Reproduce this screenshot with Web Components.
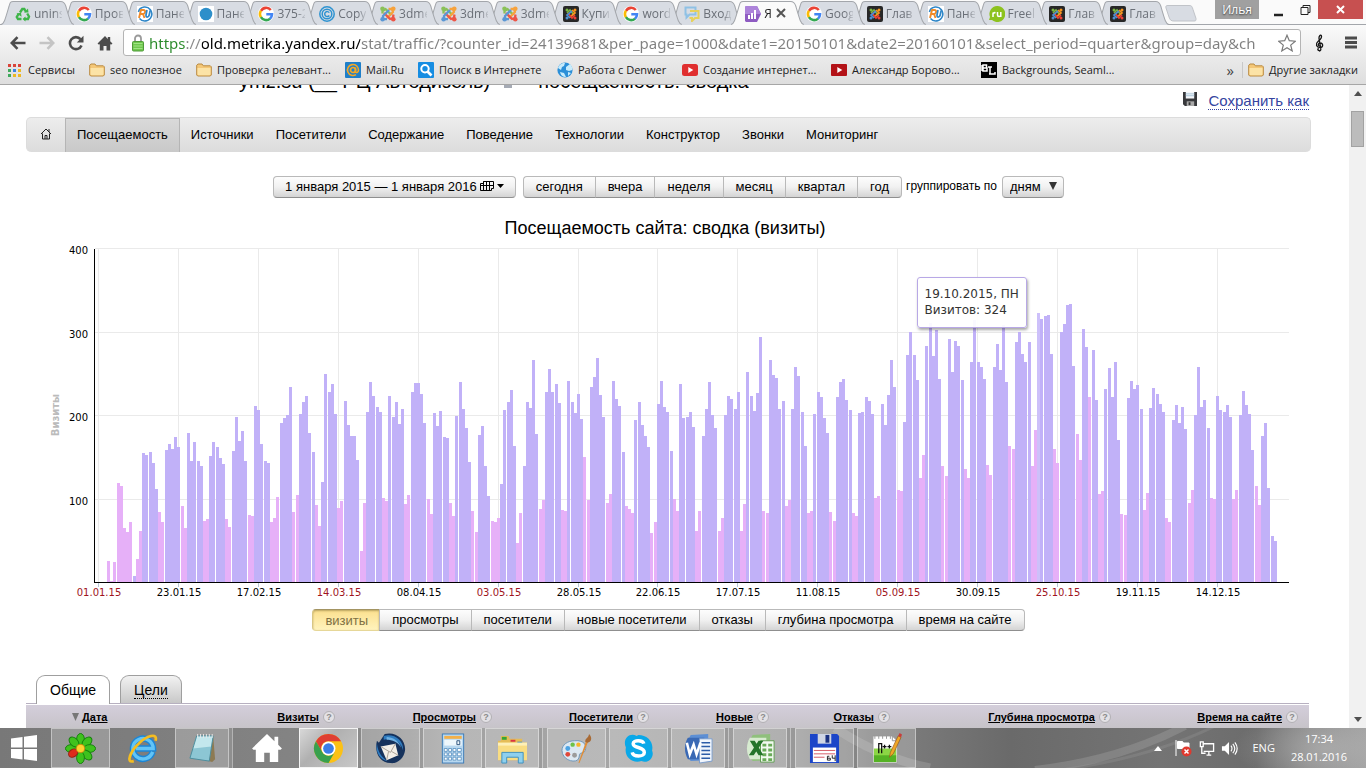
<!DOCTYPE html>
<html lang="ru">
<head>
<meta charset="utf-8">
<title>Яндекс.Метрика</title>
<style>
  html, body { margin: 0; height: 100%; }
  body { font-family: "Liberation Sans", Arial, sans-serif; font-size: 13px; color: #000; overflow: hidden; }
</style>
</head>
<body>
<desktop-screen></desktop-screen>

<script>
const UI_FONT = '"Open Sans", "Noto Sans", sans-serif';

// viewBox and markup of every icon
const ICONS = {
  recycle: ['0 0 16 16', '<g fill="none" stroke="#3fb54a" stroke-width="2.4"><path d="M5 6.5 7.3 3h2l1.8 3"/><path d="M12.2 7.5l1.8 3-1 2.5H9.500"/><path d="M6.500 13H3L1.800 11l2-3.500"/></g><path d="M9 6.500h4.500L13 2.500zM10.500 10.500v5L7.500 13zM1.500 7.500l4.500-.8.600 4z" fill="#3fb54a"/>'],
  google: ['0 0 16 16', '<rect width="16" height="16" rx="8" fill="#fff"/><g fill="none" stroke-width="2.600"><path d="M12.800 4A6 6 0 0 0 3 4.800" stroke="#ea4335"/><path d="M3 4.700a6 6 0 0 0 0 6.600" stroke="#fbbc05"/><path d="M2.900 11.200a6 6 0 0 0 9.200 1.400" stroke="#34a853"/><path d="M12 12.700A6 6 0 0 0 14 8.300H8.300" stroke="#4285f4"/></g>'],
  ru: ['0 0 16 16', '<rect width="16" height="16" fill="#fff"/><path d="M7 1a7 7 0 1 1-4.500 11.500M1.500 6C2 3 4 1.500 7 1" fill="none" stroke="#2e86c8" stroke-width="1.600"/><path d="M2 12 4 4h2.500c2.500 0 2 3.800-.5 4H3.500M6 8l1.500 4" fill="none" stroke="#f08a28" stroke-width="1.900"/><path d="M10 4 9 9c-.3 2.800 2.600 2.800 3.200 0l1-4.500" fill="none" stroke="#2e86c8" stroke-width="1.700"/>'],
  dot: ['0 0 16 16', '<rect width="16" height="16" fill="#fff"/><circle cx="8" cy="8" r="6.300" fill="#2d8fca"/>'],
  copyr: ['0 0 16 16', '<g fill="none" stroke="#2e93d1" stroke-width="1.500"><circle cx="8" cy="8" r="7.200"/><circle cx="8" cy="8" r="4.800"/><path d="M10.300 6.700a2.500 2.500 0 1 0 0 2.800"/></g>'],
  joomla: ['0 0 16 16', '<g fill="none" stroke-width="2.300" stroke-linejoin="round"><path d="M2.500 7.500V5L5.500 3l6 6" stroke="#8ac158"/><path d="M8.500 3 12 3l1 3-6 6" stroke="#f7a23c"/><path d="M13.500 8.500 13 12l-3 1-6-6" stroke="#ee5547"/><path d="M7 13.200 3 13V10l6-6" stroke="#5b97d4"/></g><circle cx="2.500" cy="2.700" r="2.300" fill="#8ac158"/><circle cx="13.300" cy="2.700" r="2.300" fill="#f7a23c"/><circle cx="13.300" cy="13.300" r="2.300" fill="#ee5547"/><circle cx="2.600" cy="13.300" r="2.300" fill="#5b97d4"/>'],
  joomlaDark: ['0 0 16 16', '<rect width="16" height="16" rx="2" fill="#272727"/><g fill="none" stroke-width="1.700"><path d="M4 7l3-3 4 5" stroke="#7ab843"/><path d="M9 4l3 3-5 4" stroke="#f7941e"/><path d="M12 9l-3 3-4-5" stroke="#ee4035"/><path d="M7 12 4 9l5-4" stroke="#4f8fd0"/></g><circle cx="4" cy="4" r="1.500" fill="#7ab843"/><circle cx="12" cy="4" r="1.500" fill="#f7941e"/><circle cx="12" cy="12" r="1.500" fill="#ee4035"/><circle cx="4" cy="12" r="1.500" fill="#4f8fd0"/>'],
  chat: ['0 0 16 16', '<path d="M1.500 1.500h10v7h-6l-3 3v-3h-1z" fill="none" stroke="#8fc1e5" stroke-width="2"/><path d="M6 5h8.500v7H11l-3 3v-3H5.500" fill="none" stroke="#e6d15c" stroke-width="2"/>'],
  metrika: ['0 0 16 16', '<path d="M1 0h11l4 8-4 8H1L0 15V1z" fill="#8f5cc2"/><path d="M1 0h11l4 8H0V1z" fill="#ad83da"/><path d="M3 9h2v4H3zM6 7h2v6H6zM9 4h2v9H9z" fill="#fff"/>'],
  freeRu: ['0 0 16 16', '<path d="M8 0a8 8 0 1 1-5 14H0l1-3A8 8 0 0 1 8 0z" fill="#8dc21f"/><path d="M4 11V6.500M4 8c.5-1.500 1.500-1.500 2.500-1.300M8.500 6v3c0 2 3 2 3.300 0V6v5" fill="none" stroke="#fff" stroke-width="1.500"/>'],
  back: ['0 0 16 16', '<path d="M15.500 8H2M7.500 2.200 1.800 8l5.700 5.800" fill="none" stroke="#4c4c4c" stroke-width="2.600"/>'],
  forward: ['0 0 16 16', '<path d="M.5 8H14M8.500 2.200 14.200 8l-5.700 5.800" fill="none" stroke="#c4c4c4" stroke-width="2.600"/>'],
  reload: ['0 0 16 16', '<path d="M13.500 10.500a6 6 0 1 1-1-6.300" fill="none" stroke="#4c4c4c" stroke-width="2.600"/><path d="M15.500.8v6.700H8.800z" fill="#4c4c4c"/>'],
  home: ['0 0 16 16', '<path d="M8 1 .5 8.500 2 9.800l.8-.8v6.500h3.700V11h3v4.500h3.700V9l.8.800 1.500-1.300-2.300-2.300V2h-2.400v1.900z" fill="#4c4c4c"/>'],
  lock: ['0 0 12 18', '<path d="M3 8V4.500a3 3 0 0 1 6 0V8" fill="none" stroke="#9a9a9a" stroke-width="1.800"/><rect x=".5" y="7.500" width="11" height="9.500" rx="1" fill="#6fc74e" stroke="#4f9a38"/><path d="M1.500 9.500h9M1.500 12h9M1.500 14.500h9" stroke="#a0e384" stroke-width="1"/>'],
  star: ['0 0 18 18', '<path d="M9 1.200 11.300 6.700l6 .5-4.600 3.900 1.500 5.800L9 13.700l-5.200 3.200 1.500-5.800L.7 7.200l6-.5z" fill="#fff" stroke="#7a7a7a" stroke-width="1.200"/>'],
  clef: ['0 0 12 18', '<path d="M6 16.500c-2 .5-3-1.500-1.300-2.200M5 17c2 0 2-1.500 1.700-3L5 4.500C4.700 2 6.500.5 7.300 1.500 8.500 4 6.500 5.500 4 7.500c-3 2.500-1.500 6 2 6 3.500 0 3.500-4.500.3-4.500-2.500 0-2.500 2.800-.8 3" fill="none" stroke="#151515" stroke-width="1.300"/>'],
  menu: ['0 0 14 13', '<path d="M1 2h12M1 6.500h12M1 11h12" stroke="#4c4c4c" stroke-width="3"/>'],
  apps: ['0 0 16 16', '<path d="M1 2h3v3H1zM11 2h3v3h-3z" fill="#d9443a"/><path d="M6 2h3v3H6z" fill="#d9443a"/><path d="M1 7h3v3H1z" fill="#40a95c"/><path d="M6 7h3v3H6z" fill="#3d84e2"/><path d="M11 7h3v3h-3z" fill="#edb824"/><path d="M1 12h3v3H1z" fill="#40a95c"/><path d="M6 12h3v3H6zM11 12h3v3h-3z" fill="#edb824"/>'],
  folder: ['0 0 16 14', '<path d="M.7 12V2.200L2 1h4l1.300 1.800h7l1 1V12l-1 1H1.700z" fill="#f4c777" stroke="#b98b42"/><path d="M1.500 5h13v6.500l-1 .8h-11l-1-.8z" fill="#fce3a6"/>'],
  mailru: ['0 0 16 16', '<rect width="16" height="16" rx="1" fill="#1f7fc9"/><g fill="none" stroke="#f7a823"><circle cx="8" cy="8" r="2.500" stroke-width="1.700"/><path d="M10.500 5.500v4c0 1.500 3 1.500 3-1.500a5.500 5.500 0 1 0-2.500 4.600" stroke-width="1.600"/></g>'],
  search: ['0 0 16 16', '<rect width="16" height="16" rx="1" fill="#168de2"/><circle cx="7" cy="6.700" r="3.700" fill="none" stroke="#fff" stroke-width="2"/><path d="M9.500 9.500l4 4" stroke="#fff" stroke-width="2.600"/>'],
  globe: ['0 0 16 16', '<circle cx="8" cy="8" r="7.600" fill="#2b8fd8"/><path d="M1 6c1-4 5-5.500 7-5l-1 3-2 1-1 3zM9 5l4-3c2 2 2.500 4 2.300 6L12 9 9 8zM3 10l4 1 2 4c-3 0-5-1-6-5zM11 10l3 1-3 3z" fill="#c7ebfb"/>'],
  yt: ['0 0 16 16', '<rect y="2" width="16" height="12" rx="2.500" fill="#e02f2f"/><path d="M6.300 5v6l5-3z" fill="#fff"/>'],
  ytDark: ['0 0 16 16', '<rect y="2" width="16" height="12" rx="1" fill="#b31217"/><path d="M6.300 5v6l5-3z" fill="#fff"/>'],
  bl: ['0 0 16 16', '<rect width="16" height="16" fill="#000"/><path d="M2 3h3.500v3H2zM2 6h4v3H2zM1 3v6M9 5v7h5v-2M7 5h4M8 12h4" fill="none" stroke="#fff" stroke-width="1.500"/>'],
  disk: ['0 0 15 15', '<path d="M0 0h15v15H2l-2-2z" fill="#38393c"/><path d="M3 0h9v7H3z" fill="#f5f8fb"/><path d="M3 2h9M3 4h9" stroke="#a8c4d8"/><path d="M4 10h8v5H4z" fill="#aaa"/><path d="M6 11h2v3H6z" fill="#333"/>'],
  house: ['0 0 12 12', '<path d="M1 6 6 1l5 5M2.500 5.500V11h7V5.500M9 1v3M5 11V7.500h2V11" fill="none" stroke="#222"/>'],
  calendar: ['0 0 14 10', '<path d="M3.500.5h10v7h-2v2H.5v-7h3zM3.500.5v9M6.500.5v9M9.500.5v9M.5 4.500h13" fill="none" stroke="#000"/>'],
  windows: ['0 0 28 28', '<path d="M1 4.500 12.500 3v10.500H1zM14 2.800 27 1v12.500H14zM1 15h11.500v10.500L1 24zM14 15h13v12l-13-1.800z" fill="#fff"/>'],
  icq: ['0 0 32 32', '<g fill="#3fc21d" stroke="#14800c"><ellipse cx="16" cy="6.500" rx="4" ry="6"/><ellipse cx="16" cy="6.500" rx="4" ry="6" transform="rotate(45 16 16)"/><ellipse cx="16" cy="6.500" rx="4" ry="6" transform="rotate(90 16 16)"/><ellipse cx="16" cy="6.500" rx="4" ry="6" transform="rotate(135 16 16)"/><ellipse cx="16" cy="6.500" rx="4" ry="6" transform="rotate(180 16 16)"/><ellipse cx="16" cy="6.500" rx="4" ry="6" transform="rotate(270 16 16)"/><ellipse cx="16" cy="6.500" rx="4" ry="6" transform="rotate(315 16 16)"/></g><ellipse cx="16" cy="7" rx="3.800" ry="5" fill="#e02a1b" stroke="#921" transform="rotate(238 16 16)"/><circle cx="16" cy="16" r="4.200" fill="#ffd22e" stroke="#c89010"/>'],
  ie: ['0 0 32 32', '<path d="M26.500 19.500A10.500 10.500 0 1 1 27 16H9" fill="none" stroke="#1c86d6" stroke-width="6.500"/><path d="M26.500 19.500A10.500 10.500 0 1 1 27 16H9" fill="none" stroke="#62c4f6" stroke-width="3.500"/><path d="M7 29c-9 3-3-11 5-18C20 3 32-1 29.500 8" fill="none" stroke="#f4bd21" stroke-width="2.800"/>'],
  notes: ['0 0 32 32', '<path d="M10 3h17l2 24-3 3-4-1z" fill="#8d7a52"/><path d="M10 3h17l-4 26-20-3z" fill="#8cc6d4"/><path d="M10 3h17l-2 11-19 2z" fill="#c3e7ed"/><path d="M10 3h17l-4 26-20-3z" fill="none" stroke="#4b8c9d"/><path d="M11 1v4M14 1v4M17 1v4M20 1v4M23 1v4M26 1v4" stroke="#e8e8e8"/>'],
  bigHome: ['0 0 32 30', '<path d="M16 0 0 15.500l1.500 1.500H4v13h9V20h6v10h9V17h2.500l1.500-1.500-4-4V3h-4v4.700z" fill="#fff"/>'],
  chrome: ['0 0 32 32', '<circle cx="16" cy="16" r="15" fill="#fbc116"/><path d="M3 8.500A15 15 0 0 1 29 8.500H16A7.500 7.500 0 0 0 9.500 20z" fill="#df3e32"/><path d="M3 8.500A15 15 0 0 0 16 31l6.500-11.300A7.500 7.500 0 0 1 9.500 19.700z" fill="#38a04d"/><circle cx="16" cy="16" r="7.200" fill="#fff"/><circle cx="16" cy="16" r="5.500" fill="#3c7ee6"/>'],
  bird: ['0 0 32 32', '<path d="M8 4 10 1c12-3 22 6 21 17-1 8-8 14-15 13C5 31-1 20 2 8l2 2z" fill="#16325c"/><path d="M9 3c10-3 21 4 20 15C27 9 19 5 9 7zM2 11c1 9 5 14 11 18C6 28 0 20 2 11z" fill="#2f7cc0"/><path d="M12 4c6 0 13 4 15 11C23 9 18 7 12 7z" fill="#6fb1e4"/><path d="M6 14l15-3 3 12-12 5z" fill="#f3efe8"/><path d="M6 14l10 6 5-9M12 28l2-9M24 23l-7-4" fill="none" stroke="#a8a097"/>'],
  calc: ['0 0 24 32', '<rect x="1" y="1" width="22" height="30" fill="#b8d8f0" stroke="#3e7db8"/><path d="M3 3h18v3H3z" fill="#f2b04a"/><path d="M3 7h18v6H3z" fill="#eef7fc"/><path d="M16 8h3v4h-3z" fill="none" stroke="#2e5680"/><path d="M3 16h3v3H3zM7.500 16h3v3h-3zM12 16h3v3h-3zM16.500 16h4v3h-4zM3 20.500h3v3H3zM7.500 20.500h3v3h-3zM12 20.500h3v3h-3zM16.500 20.500h4v3h-4zM3 25h3v3H3zM7.500 25h3v3h-3zM12 25h3v3h-3zM16.500 25h4v3h-4z" fill="#fff" stroke="#508bbd" stroke-width=".8"/>'],
  files: ['0 0 32 32', '<path d="M1 8h3V3h8l1 3h13v4h5v18H1z" fill="#e5bd57"/><path d="M5 4h5v3H5z" fill="#37a537"/><path d="M14 7h5v2h-5z" fill="#d34"/><path d="M21 9h5v2h-5z" fill="#38c"/><path d="M1 10h30v18H1z" fill="#f9dd82"/><path d="M1 10h30v3H1z" fill="#fdf0b8"/><path d="M5 31V20h22v11h-5v-6H10v6z" fill="#8ed0ee" stroke="#3f92bf"/>'],
  paint: ['0 0 32 32', '<path d="M14 8c10-1 13 5 11 10-1 3-3 2-5 3s0 4-3 7C12 31 1 27 1 18 1 12 7 8 14 8z" fill="#dce8f2" stroke="#6f97ba"/><circle cx="7" cy="16" r="2.500" fill="#4ba3e4"/><circle cx="12" cy="12" r="2.300" fill="#6cc24a"/><circle cx="18" cy="12" r="2.300" fill="#f7b52b"/><circle cx="7" cy="22" r="2.500" fill="#e0483a"/><circle cx="14" cy="23" r="2.500" fill="#9b9b9b"/><path d="M18 31 26 8l2 1-9 22z" fill="#e08d36"/><path d="M25 9c0-4 3-3 4-8 4 4 2 9-2 9z" fill="#a86a35"/>'],
  skype: ['0 0 32 32', '<path d="M16 2c9 0 16 7 14 16 3 7-4 14-11 11C9 32 1 24 3 15-1 6 7-1 14 3z" fill="#0aa8e8"/><path d="M21.500 11c-1-4-11-4-11 0 0 5 11.500 3 11.500 9 0 5-11.500 5-12.500 0" fill="none" stroke="#fff" stroke-width="3.600"/>'],
  word: ['0 0 32 32', '<path d="M8 2 26 1v27l-18 1C3 24 2 10 8 2z" fill="#5d8fd4"/><path d="M5 5h17v22H5C1 20 1 12 5 5z" fill="#3a69b4"/><path d="M17 6h13v23l-13 2z" fill="#f1f6fd" stroke="#7c9dcb"/><path d="M19 10h9M19 14h9M19 18h9M19 22h9M19 26h9" stroke="#2c5ca8" stroke-width="1.600"/><path d="M4 10l3 12 4-10 3 10 4-12" fill="none" stroke="#fff" stroke-width="2.600"/>'],
  excel: ['0 0 32 32', '<path d="M8 2 26 1v27l-18 1C3 24 2 10 8 2z" fill="#8fc07c"/><path d="M5 5h17v22H5C1 20 1 12 5 5z" fill="#d7ebd0"/><path d="M16 8h14v22H16z" fill="#f3faf1" stroke="#5f9d51"/><path d="M18 11h4v3h-4zM24 11h4v3h-4zM18 16h4v3h-4zM24 16h4v3h-4zM18 21h4v3h-4zM24 21h4v3h-4zM18 26h4v3h-4zM24 26h4v3h-4z" fill="#69aa58"/><path d="M5 8h5l9 15h-5zM14 8h5L9 23H4z" fill="#24742a"/>'],
  floppy: ['0 0 32 32', '<path d="M1 1h28l2 2v28H1z" fill="#1b45c8"/><path d="M9 1h14v10H9z" fill="#d0d6e4"/><path d="M17 2h4v8h-4z" fill="#1b3180"/><path d="M4 15h24v15H4z" fill="#fff"/><path d="M5 18h22M5 21.500h22M5 25h11" stroke="#d45a64"/><path d="M21 24h-2v4h3v-2h-3M24 23v3h3M27 23v6" fill="none" stroke="#222"/>'],
  npp: ['0 0 32 32', '<path d="M2 3h20l5 5v23H2z" fill="#fff" stroke="#999"/><path d="M3 16h23v14H3z" fill="#8bd644"/><path d="M3 23h23v7H3z" fill="#55b224"/><path d="M4 2v4M8 2v4M12 2v4M16 2v4M20 2v4" stroke="#999"/><path d="M22 3v5h5" fill="none" stroke="#999"/><path d="M8 21V11h3v10M12 14h4M14 12v4M17 14h4M19 12v4" fill="none" stroke="#111" stroke-width="1.300"/><path d="M19 25l1-5L28 3l3 1.500-8 17z" fill="#f0a727" stroke="#96581a" stroke-width=".7"/><path d="M28 3l1.500-3L32 1.500 31 4.500z" fill="#c83c3c"/>'],
  flag: ['0 0 18 18', '<path d="M2 1v16M3.500 2.500h5l1 1.500H15v7H9L8 9.500H3.500z" fill="#fff" stroke="#fff"/><circle cx="12.500" cy="12.500" r="5" fill="#e0392e"/><path d="M10.500 10.500l4 4M14.500 10.500l-4 4" stroke="#fff" stroke-width="1.500"/>'],
  net: ['0 0 18 18', '<path d="M6 4h10.500v8H6M9 16h5M11.500 12v4M2.500 2h3v5h-3zM4 7v7h4" fill="none" stroke="#fff" stroke-width="1.400"/>'],
  sound: ['0 0 18 18', '<path d="M1 6.500h3L8.500 2v14L4 11.500H1z" fill="#fff"/><path d="M10.500 6c1.500 2 1.500 4 0 6M12.500 4c2.500 3 2.500 7 0 10M14.700 2.500c3 4 3 9 0 13" fill="none" stroke="#fff" stroke-width="1.200"/>']
};

class SvgIcon extends HTMLElement {
  connectedCallback() {
    const [box, body] = ICONS[this.getAttribute('name')];
    const w = this.getAttribute('w') || 16;
    const h = this.getAttribute('h') || w;
    this.attachShadow({ mode: 'open' }).innerHTML = `
      <style>:host { display: block; flex: none; } svg { display: block; }</style>
      <svg viewBox="${box}" width="${w}" height="${h}" aria-hidden="true">${body}</svg>`;
  }
}
customElements.define('svg-icon', SvgIcon);


// ---------- browser ----------

class BrowserTab extends HTMLElement {
  connectedCallback() {
    const active = this.hasAttribute('active');
    this.attachShadow({ mode: 'open' }).innerHTML = `
      <style>
        :host { position: relative; flex: 1 1 0; min-width: 0; height: 25px; }
        .shape { position: absolute; top: 0; left: 0; width: calc(100% + 12px); height: 25px; }
        button { position: relative; display: flex; align-items: center; gap: 3px; width: 100%; height: 25px;
          margin: 0; padding: 2px 0 0 14px; border: 0; background: none; font: 12px ${UI_FONT}; color: ${active ? '#222' : '#6a6f77'}; }
        span { flex: 1; min-width: 0; overflow: hidden; white-space: nowrap; text-align: left;
          mask-image: linear-gradient(to right, #000 70%, rgba(0,0,0,.2)); }
        .close { position: absolute; top: 8px; right: 6px; }
      </style>
      <svg class="shape" viewBox="0 0 72 25" preserveAspectRatio="none">
        <path d="M0 25C3 24 4 20 8 6 9 3 9 2 12 2H59C62 2 63 3 64 6 68 20 69 24 72 25z" fill="${active ? '#fafafa' : '#d8dce3'}"/>
        <path d="M0 24.500C3 24 4 20 8 6 9 3 9 1.500 12 1.500H59C62 1.500 63 3 64 6 68 20 69 24 72 24.500" fill="none" stroke="#a3a6ab"/>
      </svg>
      <button><svg-icon name="${this.getAttribute('icon')}"></svg-icon><span><slot></slot></span></button>
      ${active ? '<svg class="close" width="10" height="10"><path d="M1 1l8 8M9 1 1 9" stroke="#555" stroke-width="2"/></svg>' : ''}`;
  }
}
customElements.define('browser-tab', BrowserTab);

const TABS = [
  ['recycle', 'unins'], ['google', 'Пров'], ['ru', 'Пане'], ['dot', 'Пане'], ['google', '375-2'], ['copyr', 'Copy'],
  ['joomla', '3dme'], ['joomla', '3dme'], ['joomla', '3dme'], ['joomlaDark', 'Купи'], ['google', 'word'], ['chat', 'Вход'],
  ['metrika', 'Я'], ['google', 'Goog'], ['joomlaDark', 'Глав'], ['ru', 'Пане'], ['freeRu', 'Freel'], ['joomlaDark', 'Глав'], ['joomlaDark', 'Глав']
];
const ACTIVE_TAB = 12;

class TabStrip extends HTMLElement {
  connectedCallback() {
    this.attachShadow({ mode: 'open' }).innerHTML = `
      <style>
        :host { display: flex; height: 25px; background: linear-gradient(#fafafa 24px, #a3a6ab 24px); }
        .tabs { display: flex; flex: 0 1 1156px; min-width: 0; padding-left: 1px; isolation: isolate; }
        .new { flex: none; margin: 5px 0 0 8px; }
        .window { display: flex; margin-left: auto; padding-right: 3px; align-items: flex-start; }
        button { border: 0; padding: 0; margin: 0; background: none; }
        .user { width: 44px; height: 19px; margin-right: 7px; background: #a0a0a0; color: #fff; font: 12px ${UI_FONT}; text-shadow: 0 1px 2px #333; }
        .min, .max { width: 26px; height: 19px; }
        .close { width: 45px; height: 19px; background: #c75050; }
        .window svg { display: block; margin: auto; }
      </style>
      <div class="tabs">
        ${TABS.map(([icon, title], i) => `<browser-tab icon="${icon}" style="z-index:${i === ACTIVE_TAB ? 30 : 20 - i}" ${i === ACTIVE_TAB ? 'active' : ''}>${title}</browser-tab>`).join('')}
      </div>
      <svg class="new" width="32" height="17"><path d="M3 .500H24c3 0 3 1 4 4l3 9c0 2 0 2.500-2 2.500H9c-3 0-4-1-5-4L1 3C.5 1 1 .500 3 .500z" fill="#d8dce3" stroke="#c0c3c8"/></svg>
      <div class="window">
        <button class="user">Илья</button>
        <button class="min" aria-label="Свернуть"><svg width="10" height="14"><path d="M0 12h9" stroke="#222" stroke-width="2.500"/></svg></button>
        <button class="max" aria-label="Восстановить"><svg width="11" height="13"><path d="M3 4.500V2.500h7v7H8M1 4.500h7v7H1z" fill="none" stroke="#222"/></svg></button>
        <button class="close" aria-label="Закрыть"><svg width="9" height="9"><path d="M1 1l7 7M8 1 1 8" stroke="#fff" stroke-width="2"/></svg></button>
      </div>`;
  }
}
customElements.define('tab-strip', TabStrip);

class AddressBar extends HTMLElement {
  connectedCallback() {
    this.attachShadow({ mode: 'open' }).innerHTML = `
      <style>
        :host { display: flex; align-items: center; height: 35px; background: linear-gradient(#fafafa, #e9e9e9); padding: 0 8px 0 10px; }
        button { border: 0; background: none; padding: 0; margin: 0 13px 0 0; }
        .field { flex: 1; display: flex; align-items: center; height: 25px; min-width: 0; padding: 0 4px 0 8px;
          background: #fff; border: 1px solid #b4b4b4; border-radius: 3px; }
        /* scheme green, host black, the rest grey */
        input { flex: 1; min-width: 0; height: 23px; margin: 0 0 0 5px; padding: 0; border: 0; outline: 0; font: 15px "Noto Sans", "Open Sans", sans-serif;
          color: #808080; -webkit-text-fill-color: transparent;
          background: linear-gradient(to right, #2a8a2a 37px, #888 37px 53px, #000 53px 211px, #808080 211px);
          -webkit-background-clip: text; background-clip: text; }
        .field button, .tools button { margin: 0; }
        .tools { display: flex; align-items: center; gap: 18px; margin-left: 13px; }
      </style>
      <button aria-label="Назад"><svg-icon name="back"></svg-icon></button>
      <button aria-label="Вперёд"><svg-icon name="forward"></svg-icon></button>
      <button aria-label="Обновить"><svg-icon name="reload"></svg-icon></button>
      <button aria-label="Домой" style="margin-right:10px"><svg-icon name="home"></svg-icon></button>
      <div class="field">
        <svg-icon name="lock" w="12" h="18"></svg-icon>
        <input aria-label="Адрес" value="https://old.metrika.yandex.ru/stat/traffic/?counter_id=24139681&amp;per_page=1000&amp;date1=20150101&amp;date2=20160101&amp;select_period=quarter&amp;group=day&amp;ch">
        <button aria-label="В закладки"><svg-icon name="star" w="18"></svg-icon></button>
      </div>
      <div class="tools">
        <button aria-label="Расширение"><svg-icon name="clef" w="12" h="18"></svg-icon></button>
        <button aria-label="Меню"><svg-icon name="menu" w="14" h="13"></svg-icon></button>
      </div>`;
  }
}
customElements.define('address-bar', AddressBar);

class BookmarkLink extends HTMLElement {
  connectedCallback() {
    const icon = this.getAttribute('icon');
    this.attachShadow({ mode: 'open' }).innerHTML = `
      <style>
        :host { display: block; }
        a { display: flex; align-items: center; gap: 5px; color: #222; text-decoration: none; white-space: nowrap; font: 11px/16px ${UI_FONT}; }
      </style>
      <a href="#"><svg-icon name="${icon}" w="16" h="${icon === 'folder' ? 14 : 16}"></svg-icon><slot></slot></a>`;
  }
}
customElements.define('bookmark-link', BookmarkLink);

class BookmarksBar extends HTMLElement {
  connectedCallback() {
    this.attachShadow({ mode: 'open' }).innerHTML = `
      <style>
        :host { display: flex; box-sizing: border-box; align-items: center; justify-content: space-between; height: 25px; padding: 0 8px 4px 7px;
          background: linear-gradient(#e9e9e9, #dedede); border-bottom: 1px solid #a6a6a6; color: #222; }
        nav { display: grid; grid-template-columns: 82px 107px 149px 73px 139px 125px 149px 150px auto; }
        .rest { display: flex; align-items: center; gap: 5px; }
        .rest button { border: 0; border-right: 1px solid #c8c8c8; background: none; padding: 0 8px; font: 15px/16px ${UI_FONT}; color: #444; }
      </style>
      <nav>
        <bookmark-link icon="apps">Сервисы</bookmark-link>
        <bookmark-link icon="folder">seo полезное</bookmark-link>
        <bookmark-link icon="folder">Проверка релевант...</bookmark-link>
        <bookmark-link icon="mailru">Mail.Ru</bookmark-link>
        <bookmark-link icon="search">Поиск в Интернете</bookmark-link>
        <bookmark-link icon="globe">Работа с Denwer</bookmark-link>
        <bookmark-link icon="yt">Создание интернет...</bookmark-link>
        <bookmark-link icon="ytDark">Александр Борово...</bookmark-link>
        <bookmark-link icon="bl">Backgrounds, Seaml...</bookmark-link>
      </nav>
      <div class="rest">
        <button>»</button>
        <bookmark-link icon="folder">Другие закладки</bookmark-link>
      </div>`;
  }
}
customElements.define('bookmarks-bar', BookmarksBar);

class ScrollTrack extends HTMLElement {
  connectedCallback() {
    this.attachShadow({ mode: 'open' }).innerHTML = `
      <style>
        :host { flex: none; width: 17px; box-sizing: border-box; padding: 6px 2px; display: flex; flex-direction: column; align-items: center; background: #f1f1f1; }
        .thumb { align-self: stretch; height: 34px; margin-top: 15px; background: #bcbcbc; border: 1px solid #a2a2a2; }
        svg:last-child { margin-top: auto; }
      </style>
      <svg width="8" height="5"><path d="M0 5 4 0l4 5z" fill="#505050"/></svg>
      <div class="thumb"></div>
      <svg width="8" height="5"><path d="M0 0h8L4 5z" fill="#505050"/></svg>`;
  }
}
customElements.define('scroll-track', ScrollTrack);


// ---------- report ----------

class ReportHeader extends HTMLElement {
  connectedCallback() {
    this.attachShadow({ mode: 'open' }).innerHTML = `
      <style>
        :host { display: flex; justify-content: space-between; align-items: flex-start; height: 32px; padding-right: 2px; }
        h1 { display: flex; gap: 14px; margin: -16px 0 0 213px; font: 20px/24px "Liberation Sans", Arial, sans-serif; white-space: nowrap; }
        i { width: 8px; height: 9px; margin: 10px 12px 0 0; background: #a5aab4; }
        .save { display: flex; gap: 11px; padding-top: 7px; }
        a { font-size: 15px; line-height: 17px; color: #3544a0; text-decoration: none; border-bottom: 1px dotted #3544a0; }
      </style>
      <h1><span>ymz.su (__ РЦ Автодизель)</span><i></i><span>посещаемость: сводка</span></h1>
      <div class="save"><svg-icon name="disk" w="14"></svg-icon><a href="#">Сохранить как</a></div>`;
  }
}
customElements.define('report-header', ReportHeader);

class ReportNav extends HTMLElement {
  connectedCallback() {
    const items = ['Посещаемость', 'Источники', 'Посетители', 'Содержание', 'Поведение', 'Технологии', 'Конструктор', 'Звонки', 'Мониторинг'];
    this.attachShadow({ mode: 'open' }).innerHTML = `
      <style>
        :host { display: flex; box-sizing: border-box; height: 35px; border: 1px solid #dcdcdc; border-bottom: 0; border-radius: 5px;
          background: linear-gradient(#ededed, #dcdcdc); overflow: hidden; }
        a { display: flex; align-items: center; padding: 0 11px 2px; color: #000; text-decoration: none; font-size: 13px; }
        a.home { padding: 0 13px 2px; }
        a.on { background: linear-gradient(#dadada, #c9c9c9); border: solid #b5b5b5; border-width: 0 1px; box-shadow: inset 0 1px #b5b5b5; }
      </style>
      <a class="home" href="#" aria-label="Главная"><svg-icon name="house" w="12"></svg-icon></a>
      ${items.map((t, i) => `<a href="#" class="${i ? '' : 'on'}">${t}</a>`).join('')}`;
  }
}
customElements.define('report-nav', ReportNav);

const BUTTON_LOOK = 'background: linear-gradient(#fdfdfd, #f1f1f1 50%, #d4d4d4); border: 1px solid #b9b9b9; border-bottom-color: #8f8f8f;';

// comma separated labels in "items", the pressed one in "value"
class ButtonGroup extends HTMLElement {
  connectedCallback() {
    const value = this.getAttribute('value');
    this.attachShadow({ mode: 'open' }).innerHTML = `
      <style>
        :host { display: flex; }
        button { height: 22px; margin: 0; padding: 0 12px 2px; font: inherit; color: #000; ${BUTTON_LOOK} border-right-width: 0; }
        button:first-of-type { border-radius: 4px 0 0 4px; }
        button:last-of-type { border-radius: 0 4px 4px 0; border-right-width: 1px; }
        button.on { color: #7d7043; background: linear-gradient(#fbe08e, #fff3bd); border-color: #a39462 #d8c684 #e6d798; box-shadow: inset 0 1px 2px #b9a35f; padding: 1px 11px 0 12px; }
      </style>
      ${this.getAttribute('items').split(',').map(t => `<button class="${t === value ? 'on' : ''}">${t}</button>`).join('')}`;
  }
}
customElements.define('button-group', ButtonGroup);

class PeriodPicker extends HTMLElement {
  connectedCallback() {
    this.attachShadow({ mode: 'open' }).innerHTML = `
      <style>
        :host { display: flex; justify-content: center; align-items: center; height: 22px; }
        .date, select { height: 22px; margin: 0; font: inherit; color: #000; border-radius: 4px; ${BUTTON_LOOK} }
        .date { display: flex; align-items: center; gap: 3px; padding: 0 11px 2px; margin-right: 7px; }
        label { font-size: 12px; margin: 0 5px 2px 4px; }
        .pick { position: relative; display: flex; }
        select { appearance: none; width: 62px; padding: 0 0 2px 7px; }
        .pick svg { position: absolute; right: 7px; top: 6px; pointer-events: none; }
      </style>
      <button class="date">1 января 2015 — 1 января 2016 <svg-icon name="calendar" w="14" h="10"></svg-icon><svg width="7" height="4"><path d="M0 0h7L3.500 4z"/></svg></button>
      <button-group items="сегодня,вчера,неделя,месяц,квартал,год"></button-group>
      <label for="group">группировать по</label>
      <div class="pick"><select id="group"><option>дням</option></select><svg width="8" height="8"><path d="M0 0h8L4 8z" fill="#333"/></svg></div>`;
  }
}
customElements.define('period-picker', PeriodPicker);

// one bar per day, in px of a 334px high plot; the axis starts on Monday 29.12.2014
const VISITS = [
  0, 0, 0, 21, 1, 20, 99, 96, 54, 50, 60, 6, 23, 51, 129, 127, 130, 119, 93, 70, 60, 132, 138, 133, 145, 135, 76, 54,
  149, 121, 140, 121, 116, 61, 63, 126, 140, 135, 124, 118, 63, 55, 131, 165, 141, 151, 121, 67, 66, 176, 172, 138, 121, 119, 60, 64,
  85, 159, 164, 167, 195, 70, 87, 168, 180, 186, 149, 130, 77, 56, 100, 208, 190, 198, 168, 74, 81, 181, 157, 146, 146, 122, 31, 79,
  170, 200, 186, 175, 170, 84, 81, 186, 165, 180, 158, 173, 78, 87, 190, 199, 199, 188, 159, 83, 68, 169, 156, 171, 145, 144, 79, 66,
  166, 200, 173, 154, 120, 71, 50, 147, 156, 116, 86, 61, 60, 64, 98, 172, 180, 192, 136, 39, 69, 116, 180, 174, 222, 148, 73, 82,
  190, 213, 190, 198, 179, 72, 71, 201, 180, 169, 188, 163, 125, 82, 195, 205, 224, 187, 165, 79, 88, 201, 183, 176, 130, 76, 73, 69,
  162, 180, 157, 146, 135, 49, 60, 178, 201, 175, 170, 131, 83, 71, 198, 164, 165, 170, 155, 51, 71, 146, 173, 200, 167, 154, 51, 64,
  167, 186, 183, 173, 190, 51, 78, 210, 186, 171, 189, 245, 71, 69, 222, 207, 204, 173, 181, 76, 82, 173, 215, 206, 170, 136, 69, 71,
  168, 190, 185, 164, 149, 70, 61, 185, 200, 203, 182, 172, 69, 66, 169, 170, 185, 181, 168, 84, 86, 178, 157, 187, 222, 195, 92, 91,
  160, 227, 250, 227, 202, 104, 127, 236, 259, 226, 252, 203, 116, 106, 243, 210, 241, 236, 202, 113, 104, 220, 262, 220, 215, 203, 117, 107,
  215, 238, 212, 257, 200, 136, 133, 240, 250, 228, 220, 240, 116, 152, 269, 263, 266, 267, 228, 133, 119, 250, 258, 277, 278, 216, 148, 122,
  253, 235, 185, 232, 182, 88, 91, 193, 214, 185, 220, 142, 68, 67, 184, 201, 193, 197, 173, 72, 89, 174, 194, 188, 178, 170, 64, 60,
  162, 177, 159, 175, 153, 79, 92, 167, 215, 175, 182, 154, 84, 83, 186, 172, 170, 177, 165, 83, 92, 167, 191, 177, 168, 132, 96, 77,
  146, 159, 94, 46, 41
];
const HOLIDAYS = [3, 4, 5, 6, 7, 8, 9, 10, 56, 123, 165, 310];
const DATES = ['01.01.15', '23.01.15', '17.02.15', '14.03.15', '08.04.15', '03.05.15', '28.05.15', '22.06.15',
  '17.07.15', '11.08.15', '05.09.15', '30.09.15', '25.10.15', '19.11.15', '14.12.15'];
const RED_DATES = ['01.01.15', '14.03.15', '03.05.15', '05.09.15', '25.10.15'];
const HOVERED = 294;

class VisitsChart extends HTMLElement {
  connectedCallback() {
    this.attachShadow({ mode: 'open' }).innerHTML = `
      <style>
        :host { display: block; position: relative; height: 358px; }
        svg { display: block; width: 100%; height: 358px; font: 10px "DejaVu Sans", Verdana, sans-serif; }
        .tip { position: absolute; left: 69.3%; top: 35px; box-sizing: border-box; width: 110px; height: 51px; padding: 8px 0 0 7px; white-space: nowrap;
          font: 12px/16px "DejaVu Sans", Verdana, sans-serif; color: #333; background: rgba(255,255,255,.92);
          border: 1px solid #b8a8e6; border-radius: 3px; box-shadow: 1px 2px 3px rgba(0,0,0,.35); }
      </style>
      <svg role="img" aria-label="Визиты по дням"></svg>
      <div class="tip"><div>19.10.2015, ПН</div><div>Визитов: 324</div></div>`;
    this.svg = this.shadowRoot.querySelector('svg');
    new ResizeObserver(() => this.draw()).observe(this);
  }

  draw() {
    const left = 69, top = 6, base = 340;
    const right = this.clientWidth - 22;
    const pitch = (right - left) / 373.5;
    let out = '';

    for (let n = 0; n < 4; n++) {
      const y = top + Math.round(n * (base - top) / 4);
      out += `<rect x="${left}" y="${y}" width="${right - left}" height="1" fill="#eaeaea"/>
        <text x="62" y="${y + 6}" text-anchor="end">${400 - n * 100}</text>`;
    }
    DATES.forEach((d, n) => {
      const x = left + 3 + Math.round(n * 25 * pitch);
      out += `<rect x="${x}" y="${top}" width="1" height="${base - top}" fill="#eaeaea"/>
        <rect x="${x}" y="${base}" width="1" height="5" fill="#b5c5d5"/>
        <text x="${x + 1}" y="${base + 14}" text-anchor="middle" fill="${RED_DATES.includes(d) ? '#a0141e' : '#000'}">${d}</text>`;
    });
    VISITS.forEach((h, i) => {
      if (!h) return;
      const off = i % 7 > 4 || HOLIDAYS.includes(i);
      const fill = i === HOVERED ? '#cdc0fa' : off ? '#e6b0f8' : '#c1b1f8';
      out += `<rect x="${left + Math.round(2.4 + i * pitch)}" y="${base - h}" width="3" height="${h}" fill="${fill}"/>`;
    });
    out += `<rect x="${left - 1}" y="${top + 1}" width="1" height="${base - top}"/>
      <rect x="${left}" y="${base}" width="${right - left}" height="1"/>
      <text transform="translate(33 173) rotate(-90)" text-anchor="middle" font-weight="bold" fill="#bbb">Визиты</text>`;
    this.svg.innerHTML = out;
  }
}
customElements.define('visits-chart', VisitsChart);

class ReportTabs extends HTMLElement {
  connectedCallback() {
    this.attachShadow({ mode: 'open' }).innerHTML = `
      <style>
        :host { display: flex; gap: 10px; padding-left: 10px; margin-right: 2px; height: 28px; border-bottom: 1px solid #b7b0c0; }
        button { box-sizing: border-box; height: 28px; margin: 0; padding: 0 13px; font: inherit; font-size: 14px; color: #000;
          border: 1px solid #9f9f9f; border-bottom: 0; border-radius: 9px 9px 0 0; background: linear-gradient(#f2f2f2, #c8c8c8); }
        button.on { height: 29px; background: #fff; }
        button span { border-bottom: 1px dotted #000; }
      </style>
      <button class="on">Общие</button>
      <button><span>Цели</span></button>`;
  }
}
customElements.define('report-tabs', ReportTabs);

class ReportTable extends HTMLElement {
  connectedCallback() {
    const cols = [['Визиты', 216], ['Просмотры', 157], ['Посетители', 157], ['Новые', 120], ['Отказы', 121], ['Глубина просмотра', 221], ['Время на сайте', 187]];
    this.attachShadow({ mode: 'open' }).innerHTML = `
      <style>
        :host { display: block; margin: 1px 2px 0 0; }
        table { width: 100%; table-layout: fixed; border-collapse: collapse; background: linear-gradient(#d4cedb, #c6c3c8 24px); }
        th { height: 24px; padding: 0 11px 0 0; text-align: right; white-space: nowrap; font: bold 11px/14px "Liberation Sans", Arial, sans-serif; }
        th > div { display: flex; justify-content: flex-end; align-items: center; gap: 4px; }
        th.first > div { justify-content: flex-start; padding-left: 46px; gap: 3px; }
        a { color: #000; text-decoration: underline; }
        button { width: 12px; height: 12px; padding: 0; border: 1px solid #b2b0b4; border-radius: 6px; background: #e3e1e5;
          font: bold 9px/10px "Liberation Sans", Arial, sans-serif; color: #8a8a8a; }
      </style>
      <table>
        <colgroup><col style="width:${104 / 12.83}%">${cols.map(c => `<col style="width:${c[1] / 12.83}%">`).join('')}</colgroup>
        <thead><tr>
          <th class="first"><div><svg width="7" height="8"><path d="M0 0h7L3.500 8z" fill="#777"/></svg><a href="#">Дата</a></div></th>
          ${cols.map(c => `<th><div><a href="#">${c[0]}</a><button>?</button></div></th>`).join('')}
        </tr></thead>
      </table>`;
  }
}
customElements.define('report-table', ReportTable);

class MetrikaPage extends HTMLElement {
  connectedCallback() {
    this.attachShadow({ mode: 'open' }).innerHTML = `
      <style>
        :host { display: block; flex: 1; min-width: 0; padding: 0 38px 0 26px; background: #fff; }
        period-picker { margin-top: 24px; }
        h2 { margin: 18px 0 2px; padding-right: 7px; font-size: 18px; line-height: 24px; font-weight: normal; text-align: center; }
        .metrics { justify-content: center; margin: 9px 0 44px; }
      </style>
      <report-header></report-header>
      <report-nav></report-nav>
      <period-picker></period-picker>
      <h2>Посещаемость сайта: сводка (визиты)</h2>
      <visits-chart></visits-chart>
      <button-group class="metrics" value="визиты" items="визиты,просмотры,посетители,новые посетители,отказы,глубина просмотра,время на сайте"></button-group>
      <report-tabs></report-tabs>
      <report-table></report-table>`;
  }
}
customElements.define('metrika-page', MetrikaPage);


// ---------- taskbar ----------

class TaskButton extends HTMLElement {
  connectedCallback() {
    const state = this.getAttribute('state') || '';
    this.attachShadow({ mode: 'open' }).innerHTML = `
      <style>
        :host { display: block; flex: 0 1 59px; }
        button { display: flex; align-items: center; justify-content: center; box-sizing: border-box; width: 100%; height: 40px; margin: 0; padding: 0;
          border: 1px solid transparent; background: none; }
        .open, .stack { background: rgba(255,255,255,.22); border-color: rgba(255,255,255,.42); }
        .stack { width: calc(100% - 5px); box-shadow: 3px 0 rgba(90,90,90,.4), 4px 0 rgba(255,255,255,.4); }
        .active { background: linear-gradient(135deg, #d8d8d8, #b0b0b0 40%, #c8c8c8); border-color: #f4f4f4; }
      </style>
      <button class="${state}" aria-label="${this.getAttribute('label')}"><svg-icon name="${this.getAttribute('icon')}" w="${this.getAttribute('w') || 31}" h="${this.getAttribute('h') || 31}"></svg-icon></button>`;
  }
}
customElements.define('task-button', TaskButton);

class TaskBar extends HTMLElement {
  connectedCallback() {
    this.attachShadow({ mode: 'open' }).innerHTML = `
      <style>
        :host { position: relative; display: flex; justify-content: space-between; height: 40px; flex: none; font: 11px/18px ${UI_FONT}; color: #fff;
          background:
            radial-gradient(ellipse 90px 40px at 1325px 20px, rgba(190,190,190,.5), transparent),
            linear-gradient(to right, #787878, #808080 15%, #858585 25%, #a2a2a2 33%, #a6a6a6 45%, #999 58%, #808080 64%, #6a6a6a 74%, #747474 85%, #6c6c6c 92%, #8c8c8c 96%, #a0a0a0); }
        .streaks { position: absolute; inset: 0; width: 100%; height: 40px; }
        .apps { position: relative; display: flex; gap: 3px; flex: 0 1 916px; min-width: 0; }
        .start { flex: none; width: 48px; padding: 0; margin: 0; border: 0; background: none; display: flex; align-items: center; justify-content: center; }
        .tray { position: relative; display: flex; align-items: center; gap: 6px; padding-right: 19px; }
        .tray span { margin: 0 10px 0 8px; font-size: 11px; }
        time { text-align: center; }
      </style>
      <svg class="streaks" viewBox="0 0 1366 40" preserveAspectRatio="none" aria-hidden="true">
        <path d="M835 0Q880 30 930 40" fill="none" stroke="#bbb" stroke-width="9" opacity=".3"/>
        <path d="M1035 42Q1120 32 1185-2" fill="none" stroke="#bbb" stroke-width="8" opacity=".25"/>
        <path d="M1060 42Q1150 30 1215-2" fill="none" stroke="#999" stroke-width="3" opacity=".3"/>
      </svg>
      <div class="apps">
        <button class="start" aria-label="Пуск"><svg-icon name="windows" w="28"></svg-icon></button>
        <task-button icon="icq" label="ICQ" state="open"></task-button>
        <task-button icon="ie" label="Internet Explorer"></task-button>
        <task-button icon="notes" label="Блокнот" state="stack"></task-button>
        <task-button icon="bigHome" label="Дом" w="32" h="28"></task-button>
        <task-button icon="chrome" label="Chrome" state="active"></task-button>
        <task-button icon="bird" label="Thunderbird" state="open"></task-button>
        <task-button icon="calc" label="Калькулятор" state="open" w="24"></task-button>
        <task-button icon="files" label="Проводник" state="stack"></task-button>
        <task-button icon="paint" label="Paint" state="open"></task-button>
        <task-button icon="skype" label="Skype" state="open"></task-button>
        <task-button icon="word" label="Word" state="stack"></task-button>
        <task-button icon="excel" label="Excel" state="stack"></task-button>
        <task-button icon="floppy" label="Total Commander" state="open"></task-button>
        <task-button icon="npp" label="Notepad++" state="open"></task-button>
      </div>
      <div class="tray">
        <svg width="8" height="5" style="margin-right:6px"><path d="M0 5 4 0l4 5z" fill="#fff"/></svg>
        <svg-icon name="flag" w="18"></svg-icon>
        <svg-icon name="net" w="17"></svg-icon>
        <svg-icon name="sound" w="17"></svg-icon>
        <span>ENG</span>
        <time><div>17:34</div><div>28.01.2016</div></time>
      </div>`;
  }
}
customElements.define('task-bar', TaskBar);

class DesktopScreen extends HTMLElement {
  connectedCallback() {
    this.attachShadow({ mode: 'open' }).innerHTML = `
      <style>
        :host { display: flex; flex-direction: column; height: 100vh; overflow: hidden; }
        main { flex: 1; min-height: 0; display: flex; overflow: hidden; }
      </style>
      <tab-strip></tab-strip>
      <address-bar></address-bar>
      <bookmarks-bar></bookmarks-bar>
      <main><metrika-page></metrika-page><scroll-track></scroll-track></main>
      <task-bar></task-bar>`;
  }
}
customElements.define('desktop-screen', DesktopScreen);
</script>
</body>
</html>
